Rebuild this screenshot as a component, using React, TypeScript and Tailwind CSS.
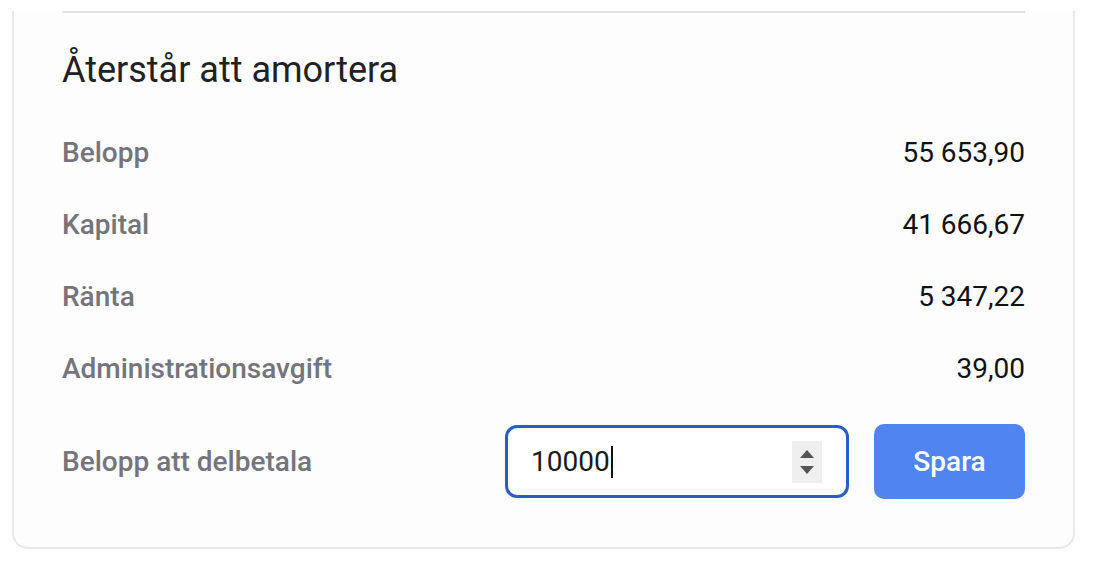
const rows = [
  { label: 'Belopp', value: '55 653,90' },
  { label: 'Kapital', value: '41 666,67' },
  { label: 'Ränta', value: '5 347,22' },
  { label: 'Administrationsavgift', value: '39,00' },
]

export default function App() {
  return (
    <div className="min-h-screen bg-white font-['Roboto',sans-serif] pl-[12px] pr-[31px]">
      {/* card, top edge scrolled out of view */}
      <div className="bg-[#fdfdfd] border-2 border-t-0 border-[#e8e8e8] rounded-b-[16px] px-[48px] pb-[48px]">
        <div className="h-[2px] bg-[#e3e3e3] mt-[11px]" />

        <h2 className="mt-[36px] text-[36px] leading-[42px] text-[#202124]">
          Återstår att amortera
        </h2>

        <div className="mt-[26px]">
          {rows.map((r) => (
            <div key={r.label} className="h-[72px] flex items-center justify-between text-[28px]">
              <span className="font-medium text-[#74747c]">{r.label}</span>
              <span className="text-[#111]">{r.value}</span>
            </div>
          ))}
        </div>

        <div className="mt-[19px] h-[75px] flex items-center text-[28px]">
          <span className="flex-1 font-medium text-[#74747c]">Belopp att delbetala</span>
          <div className="w-[344px] h-[73px] border-[3px] border-[#2a5cc6] rounded-[12px] bg-white flex items-center pl-[23px] pr-[24px]">
            <span className="text-[#1a1a1a]">10000</span>
            <span className="w-[2px] h-[32px] bg-[#111] ml-[1px]" />
            <div className="ml-auto w-[30px] h-[42px] bg-[#efefef] flex flex-col items-center justify-center gap-[8px]">
              <svg width="14" height="8" viewBox="0 0 14 8">
                <path d="M7 0 L14 8 L0 8 Z" fill="#555" />
              </svg>
              <svg width="14" height="8" viewBox="0 0 14 8">
                <path d="M0 0 L14 0 L7 8 Z" fill="#555" />
              </svg>
            </div>
          </div>
          <button className="ml-[25px] w-[151px] h-[75px] rounded-[10px] bg-[#5084ee] text-white font-medium">
            Spara
          </button>
        </div>
      </div>
    </div>
  )
}
